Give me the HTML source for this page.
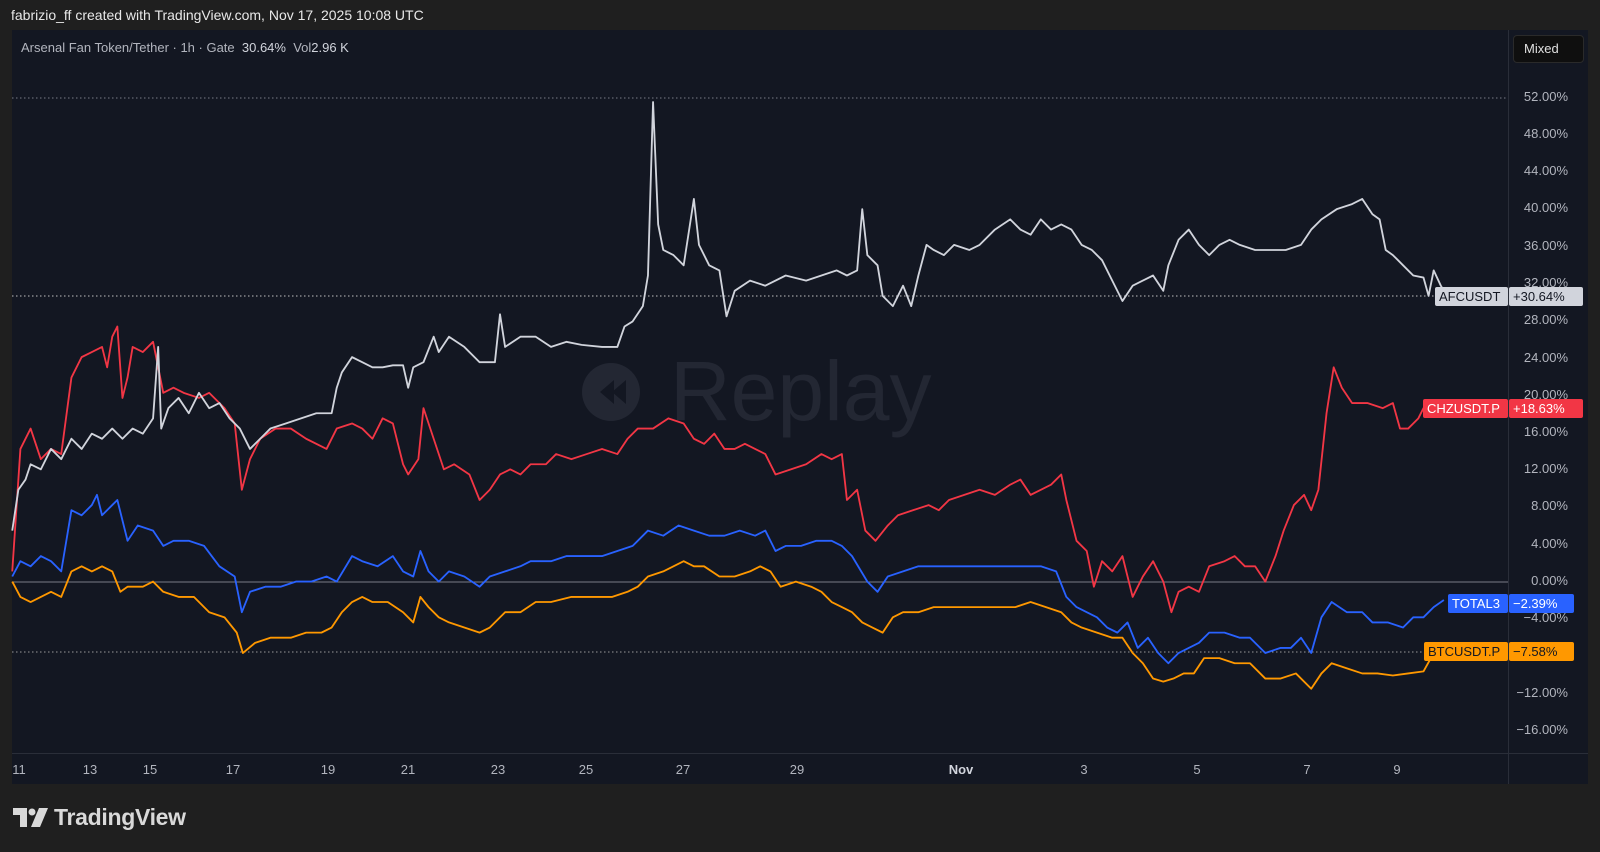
<!DOCTYPE html>
<html><head><meta charset="utf-8"><style>
html,body{margin:0;padding:0;background:#1f1f1f;width:1600px;height:852px;overflow:hidden;font-family:"Liberation Sans",sans-serif}
.abs{position:absolute}
#hdr{left:11px;top:7px;color:#e8e8e8;font-size:14px}
#panel{left:12px;top:30px;width:1576px;height:754px;background:#131722}
.ax{position:absolute;color:#b2b5be;font-size:13px;right:32px;text-align:right}
.tl{position:absolute;color:#b2b5be;font-size:13px;top:762px;transform:translateX(-50%)}
.tag{position:absolute;height:19px;line-height:19px;font-size:13px;padding:0 4px;box-sizing:border-box;border-radius:2px}
</style></head><body>
<div class="abs" id="hdr">fabrizio_ff created with TradingView.com, Nov 17, 2025 10:08 UTC</div>
<div class="abs" id="panel"></div>
<div class="abs" style="left:1508px;top:30px;width:1px;height:754px;background:#2a2e39"></div>
<div class="abs" style="left:12px;top:753px;width:1576px;height:1px;background:#2a2e39"></div>
<div class="abs" style="left:21px;top:40px;color:#b2b5be;font-size:13px">Arsenal Fan Token/Tether · 1h · Gate&nbsp; <span style="color:#d1d4dc">30.64%</span>&nbsp; Vol<span style="color:#d1d4dc">2.96 K</span></div>
<div class="abs" style="left:1513px;top:35px;width:71px;height:28px;background:#0f0f0f;border:1px solid #2a2a2a;border-radius:4px;box-sizing:border-box;color:#e0e0e0;font-size:13px;line-height:26px;padding-left:10px">Mixed</div>
<svg class="abs" style="left:0;top:0" width="1600" height="852">
<text x="760" y="420" fill="#232733" font-size="84" font-family="Liberation Sans" text-anchor="start" dx="-90">Replay</text>
<circle cx="611" cy="392" r="29" fill="#232733"/>
<path d="M614 380 L600 392 L614 404 Z M626 380 L612 392 L626 404 Z" fill="#131722"/>
<line x1="12" y1="98" x2="1508" y2="98" stroke="#787b86" stroke-dasharray="1.5 2.5"/>
<line x1="12" y1="296" x2="1435" y2="296" stroke="#c0c0c0" stroke-dasharray="1.5 2.5"/>
<line x1="12" y1="652" x2="1424" y2="652" stroke="#9a9a9a" stroke-dasharray="1.5 2.5"/>
<line x1="12" y1="582" x2="1508" y2="582" stroke="#787b86" stroke-width="1"/>
</svg>
<svg class="abs" style="left:0;top:0" width="1600" height="852" viewBox="0 0 1568 835" preserveAspectRatio="none">
<g fill="none" stroke-width="1.8" stroke-linejoin="round">
<polyline stroke="#ff9800" points="12,570 20,585 30,590 40,585 50,580 60,585 70,560 80,555 90,560 100,555 110,560 118,580 125,575 140,575 150,570 160,580 175,585 190,585 205,600 220,605 232,620 238,640 250,630 265,625 285,625 300,620 315,620 325,615 335,600 345,590 355,585 365,590 380,590 395,600 405,610 412,585 420,595 430,605 440,610 455,615 470,620 480,615 495,600 510,600 525,590 540,590 560,585 580,585 600,585 615,580 625,575 635,565 650,560 660,555 670,550 680,555 690,555 705,565 720,565 735,560 745,555 755,560 765,575 780,570 795,575 805,580 815,590 825,595 835,600 845,610 855,615 865,620 875,605 885,600 900,600 915,595 935,595 955,595 975,595 995,595 1010,590 1025,595 1040,600 1050,610 1060,615 1075,620 1090,625 1100,625 1110,640 1120,650 1130,665 1140,668 1150,665 1160,660 1170,660 1180,645 1195,645 1210,650 1225,650 1240,665 1255,665 1270,660 1285,675 1295,660 1305,650 1320,655 1335,660 1350,660 1365,662 1380,660 1395,658 1405,640"/>
<polyline stroke="#2962ff" points="12,565 20,550 30,555 40,545 50,550 60,560 70,500 80,505 90,495 95,485 100,505 110,495 115,490 125,530 135,515 150,520 160,535 170,530 185,530 200,535 215,555 230,565 237,600 245,580 260,575 275,575 290,570 305,570 320,565 330,570 345,545 355,550 370,555 385,545 395,560 405,565 412,540 420,560 430,570 440,560 455,565 470,575 480,565 495,560 510,555 520,550 540,550 555,545 575,545 590,545 605,540 620,535 635,520 650,525 665,515 680,520 695,525 710,525 725,520 740,525 750,520 760,540 770,535 785,535 800,530 815,530 825,535 835,545 850,570 860,580 870,565 885,560 900,555 920,555 940,555 960,555 980,555 1000,555 1020,555 1035,560 1045,585 1055,595 1065,600 1075,605 1085,615 1095,620 1105,610 1115,635 1125,625 1135,640 1145,650 1155,640 1165,635 1175,630 1185,620 1200,620 1215,625 1225,625 1240,640 1255,635 1265,635 1275,625 1285,640 1295,605 1305,590 1320,600 1335,600 1345,610 1360,610 1375,615 1385,605 1395,605 1405,595 1415,588"/>
<polyline stroke="#f23645" points="12,560 20,440 30,420 40,450 50,440 60,445 70,370 80,350 90,345 100,340 105,360 110,330 115,320 120,390 125,370 130,340 140,345 150,335 155,360 160,385 170,380 180,385 195,390 205,385 220,400 230,415 237,480 245,450 255,430 270,420 285,420 300,430 320,440 330,420 345,415 355,420 365,430 375,410 385,415 395,455 400,465 410,450 415,400 425,430 435,460 445,455 460,465 470,490 480,480 490,465 500,460 510,465 520,455 535,455 545,445 560,450 575,445 590,440 605,445 615,430 625,420 640,420 655,410 670,415 680,430 690,435 700,425 710,440 720,440 730,435 740,440 750,445 760,465 775,460 790,455 805,445 815,450 825,445 830,490 840,480 848,520 858,530 870,515 880,505 895,500 910,495 920,500 930,490 945,485 960,480 975,485 990,475 1000,470 1010,485 1020,480 1030,475 1040,465 1045,490 1055,530 1065,540 1072,575 1080,550 1090,560 1100,545 1110,585 1120,565 1130,550 1140,570 1148,600 1155,580 1165,575 1175,580 1185,555 1200,550 1210,545 1220,555 1230,555 1240,570 1250,545 1258,520 1268,495 1278,485 1285,500 1292,480 1300,405 1307,360 1315,380 1325,395 1340,395 1355,400 1365,395 1372,420 1380,420 1390,410 1395,400 1405,400"/>
<polyline stroke="#d1d4dc" points="12,520 18,480 25,470 30,455 40,460 50,440 60,450 70,430 80,440 90,425 100,430 110,420 120,430 130,420 140,425 150,410 155,340 158,420 165,400 175,390 185,405 195,385 205,400 215,395 225,410 235,420 245,440 255,430 265,420 280,415 295,410 310,405 325,405 330,380 335,365 345,350 355,355 365,360 375,360 385,358 395,358 400,380 405,360 415,355 425,330 430,345 440,330 455,340 470,355 485,355 490,308 495,340 510,330 525,330 540,340 555,335 570,338 590,340 605,340 612,320 620,315 630,300 635,270 640,100 645,220 650,245 660,250 670,260 680,195 685,240 695,260 705,265 712,310 720,285 735,275 750,280 770,270 790,275 805,270 820,265 830,270 840,265 845,205 850,250 860,260 865,290 875,300 885,280 893,300 900,270 908,240 915,245 925,250 935,240 950,245 960,240 975,225 990,215 1000,225 1010,230 1020,215 1030,225 1040,220 1050,225 1060,240 1070,245 1080,255 1090,275 1100,295 1110,280 1120,275 1130,270 1140,285 1145,260 1155,235 1165,225 1175,240 1185,250 1195,240 1205,235 1215,240 1230,245 1245,245 1260,245 1275,240 1285,225 1295,215 1310,205 1325,200 1335,195 1345,210 1352,215 1358,245 1365,250 1375,260 1385,270 1395,272 1400,290 1405,265 1412,280 1418,290"/>
</g></svg>
<div class="ax" style="top:89px">52.00%</div>
<div class="ax" style="top:126px">48.00%</div>
<div class="ax" style="top:163px">44.00%</div>
<div class="ax" style="top:200px">40.00%</div>
<div class="ax" style="top:238px">36.00%</div>
<div class="ax" style="top:275px">32.00%</div>
<div class="ax" style="top:312px">28.00%</div>
<div class="ax" style="top:350px">24.00%</div>
<div class="ax" style="top:387px">20.00%</div>
<div class="ax" style="top:424px">16.00%</div>
<div class="ax" style="top:461px">12.00%</div>
<div class="ax" style="top:498px">8.00%</div>
<div class="ax" style="top:536px">4.00%</div>
<div class="ax" style="top:573px">0.00%</div>
<div class="ax" style="top:610px">−4.00%</div>
<div class="ax" style="top:685px">−12.00%</div>
<div class="ax" style="top:722px">−16.00%</div>
<div class="tag" style="left:1435px;top:287px;width:73px;background:#d1d4dc;color:#131722">AFCUSDT</div>
<div class="tag" style="left:1509px;top:287px;width:74px;background:#d1d4dc;color:#131722">+30.64%</div>
<div class="tag" style="left:1423px;top:399px;width:85px;background:#f23645;color:#fff">CHZUSDT.P</div>
<div class="tag" style="left:1509px;top:399px;width:74px;background:#f23645;color:#fff">+18.63%</div>
<div class="tag" style="left:1448px;top:594px;width:60px;background:#2962ff;color:#fff">TOTAL3</div>
<div class="tag" style="left:1509px;top:594px;width:65px;background:#2962ff;color:#fff">−2.39%</div>
<div class="tag" style="left:1424px;top:642px;width:84px;background:#ff9800;color:#131722">BTCUSDT.P</div>
<div class="tag" style="left:1509px;top:642px;width:65px;background:#ff9800;color:#131722">−7.58%</div>
<div class="tl" style="left:19px">11</div>
<div class="tl" style="left:90px">13</div>
<div class="tl" style="left:150px">15</div>
<div class="tl" style="left:233px">17</div>
<div class="tl" style="left:328px">19</div>
<div class="tl" style="left:408px">21</div>
<div class="tl" style="left:498px">23</div>
<div class="tl" style="left:586px">25</div>
<div class="tl" style="left:683px">27</div>
<div class="tl" style="left:797px">29</div>
<div class="tl" style="left:961px;color:#d1d4dc;font-weight:bold">Nov</div>
<div class="tl" style="left:1084px">3</div>
<div class="tl" style="left:1197px">5</div>
<div class="tl" style="left:1307px">7</div>
<div class="tl" style="left:1397px">9</div>
<svg class="abs" style="left:13px;top:808px" width="36" height="20" viewBox="0 0 36 20">
<path d="M0 0H14V19H7V7H0Z" fill="#d9d9d9"/><circle cx="19" cy="4" r="3.5" fill="#d9d9d9"/><path d="M26 0H35L27 19H18Z" fill="#d9d9d9"/>
</svg>
<div class="abs" style="left:54px;top:804px;color:#d9d9d9;font-size:23px;font-weight:bold;letter-spacing:-0.3px">TradingView</div>
</body></html>
